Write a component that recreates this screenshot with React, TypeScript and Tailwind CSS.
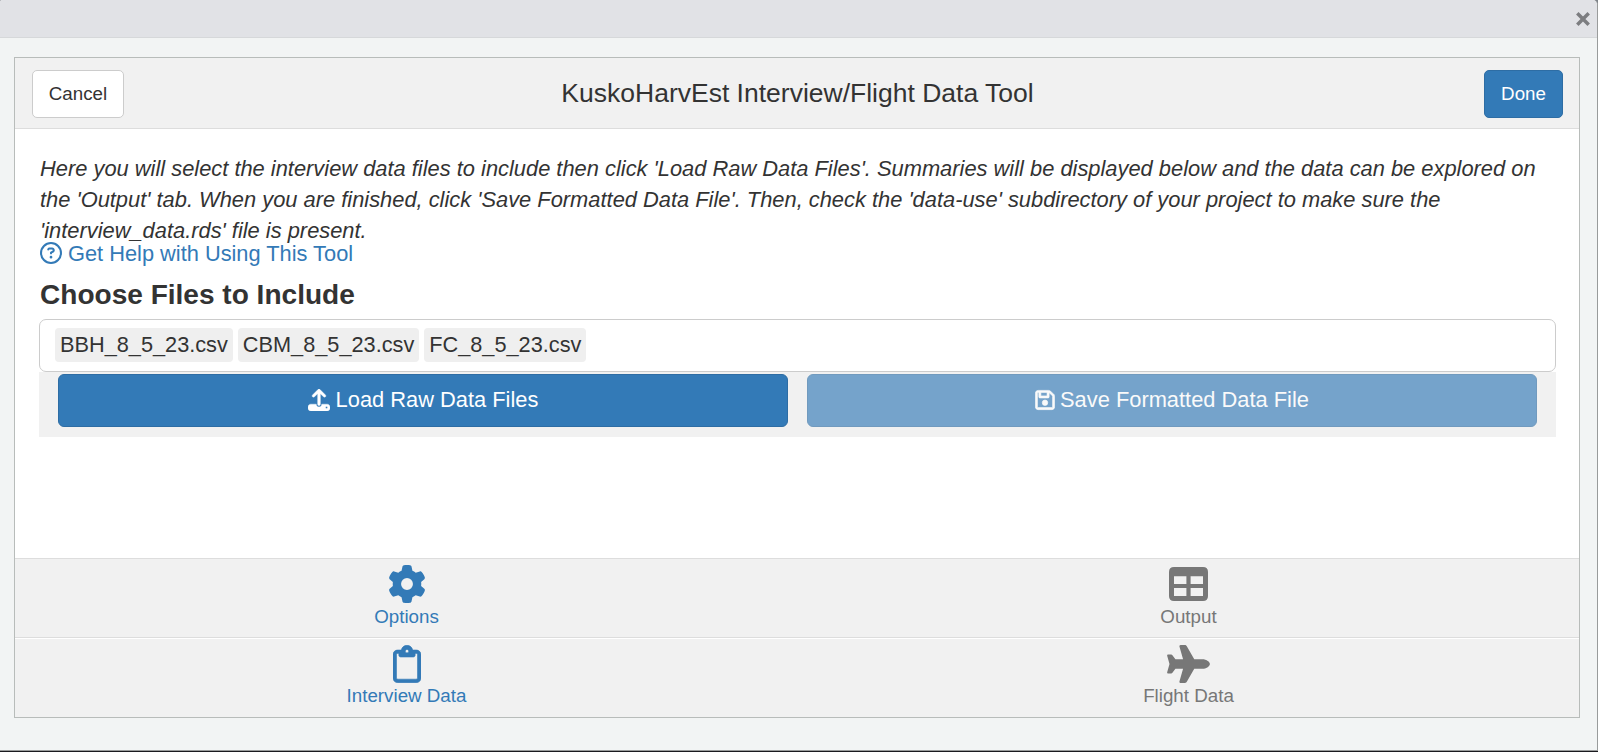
import React from "react";
import { FaGear, FaPlane, FaRegClipboard, FaRegFloppyDisk, FaRegCircleQuestion, FaUpload } from "react-icons/fa6";

const files = ["BBH_8_5_23.csv", "CBM_8_5_23.csv", "FC_8_5_23.csv"];

function TableIcon() {
  return (
    <svg viewBox="0 0 39 34" className="h-[34px] w-[39px]" fill="currentColor">
      <path
        fillRule="evenodd"
        d="M5 0 H34 Q39 0 39 5 V29 Q39 34 34 34 H5 Q0 34 0 29 V5 Q0 0 5 0 Z M5 9.2 V17 H17.4 V9.2 Z M21.6 9.2 V17 H34 V9.2 Z M5 21 V29 H17.4 V21 Z M21.6 21 V29 H34 V21 Z"
      />
    </svg>
  );
}

function Tab({ icon, label, active }: { icon: React.ReactNode; label: string; active?: boolean }) {
  return (
    <div className={`flex flex-1 flex-col items-center pl-px ${active ? "text-[#337ab7]" : "text-[#777777]"}`}>
      <div className="flex h-[50px] items-center justify-center">{icon}</div>
      <div className="-mt-[3px] text-[18.75px] leading-[22px]">{label}</div>
    </div>
  );
}

export default function App() {
  return (
    <div className="flex h-[752px] w-[1598px] flex-col overflow-hidden border-b border-[#1a1a1f] bg-[#7d8389] font-['Liberation_Sans',Arial,sans-serif] text-[#333333]">
      <div className="flex min-h-0 flex-1 flex-col overflow-hidden rounded-tl-[2px] rounded-tr-[5px] border-r border-b border-[#999b9b] bg-[#f2f4f4]">
        <div className="flex h-[38px] shrink-0 items-center justify-end border-b border-[#d6d8da] bg-[#e1e2e6] pr-[7px]">
          <svg viewBox="0 0 14 14" className="h-[14px] w-[14px]" stroke="#7c7d80" strokeWidth="3.5" fill="none">
            <path d="M1.3 1.3 L12.7 12.7 M12.7 1.3 L1.3 12.7" />
          </svg>
        </div>
        <div className="mt-[19px] ml-[14px] flex h-[661px] w-[1566px] flex-col border border-[#b8bcba] bg-white">
          <header className="flex h-[71px] shrink-0 items-center border-b border-[#dddddd] bg-[#f1f1f1] pt-px pr-[16px] pl-[17px]">
            <div className="flex flex-1">
              <button className="h-[48px] w-[92px] rounded-[5px] border border-[#cccccc] bg-white pt-px text-[18.75px]">Cancel</button>
            </div>
            <h1 className="text-[26.5px]">KuskoHarvEst Interview/Flight Data Tool</h1>
            <div className="flex flex-1 justify-end">
              <button className="h-[48px] w-[79px] rounded-[5px] border border-[#2e6da4] bg-[#337ab7] pt-px text-[18.75px] text-white">Done</button>
            </div>
          </header>
          <main className="flex flex-1 flex-col pt-[24px] pr-[23px] pl-[24px]">
            <p className="pl-px text-[21.87px] leading-[31px] whitespace-nowrap italic">
              Here you will select the interview data files to include then click 'Load Raw Data Files'. Summaries will be displayed below and the data can be explored on
              <br />
              the 'Output' tab. When you are finished, click 'Save Formatted Data File'. Then, check the 'data-use' subdirectory of your project to make sure the
              <br />
              'interview_data.rds' file is present.
            </p>
            <a className="-mt-[4px] flex h-[24px] items-center gap-[6px] pl-px text-[21.8px] leading-[24px] text-[#337ab7]">
              <FaRegCircleQuestion className="mb-[2px] h-[22px] w-[22px]" />
              Get Help with Using This Tool
            </a>
            <h2 className="mt-[13px] pl-px text-[28.05px] leading-[32px] font-bold">Choose Files to Include</h2>
            <div className="mt-[8px] flex h-[53px] items-center gap-[5px] rounded-[7px] border border-[#cccccc] bg-white px-[15px] pb-px">
              {files.map((f) => (
                <span key={f} className="flex h-[34px] items-center rounded-[4px] bg-[#efefef] px-[5px] pt-px text-[21.72px]">
                  {f}
                </span>
              ))}
            </div>
            <div className="flex h-[65px] gap-[19px] bg-[#f1f1f1] px-[19px] pt-[2px]">
              <button className="flex h-[53px] flex-1 items-center justify-center gap-[6px] rounded-[6px] border border-[#2e6da4] bg-[#337ab7] text-[21.85px] text-white">
                <FaUpload className="mb-[2px] h-[22px] w-[22px]" stroke="currentColor" strokeWidth={8} />
                Load Raw Data Files
              </button>
              <button className="flex h-[53px] flex-1 items-center justify-center gap-[5px] rounded-[6px] border border-[#2e6da4] bg-[#337ab7] text-[21.85px] text-white opacity-65">
                <FaRegFloppyDisk className="mb-[2px] h-[22px] w-[20px]" stroke="currentColor" strokeWidth={14} />
                Save Formatted Data File
              </button>
            </div>
          </main>
          <nav className="flex h-[79px] shrink-0 border-t border-[#dddddd] bg-[#f1f1f1]">
            <Tab active label="Options" icon={<FaGear className="h-[38px] w-[38px]" />} />
            <Tab label="Output" icon={<TableIcon />} />
          </nav>
          <nav className="flex h-[80px] shrink-0 border-t border-[#dddddd] bg-[#f1f1f1] shadow-[inset_0_1px_0_#ffffff]">
            <Tab active label="Interview Data" icon={<FaRegClipboard className="mt-[2px] h-[38px] w-[28px]" stroke="currentColor" strokeWidth={8} />} />
            <Tab label="Flight Data" icon={<FaPlane className="mt-[2px] h-[38px] w-[43px]" />} />
          </nav>
        </div>
      </div>
    </div>
  );
}
